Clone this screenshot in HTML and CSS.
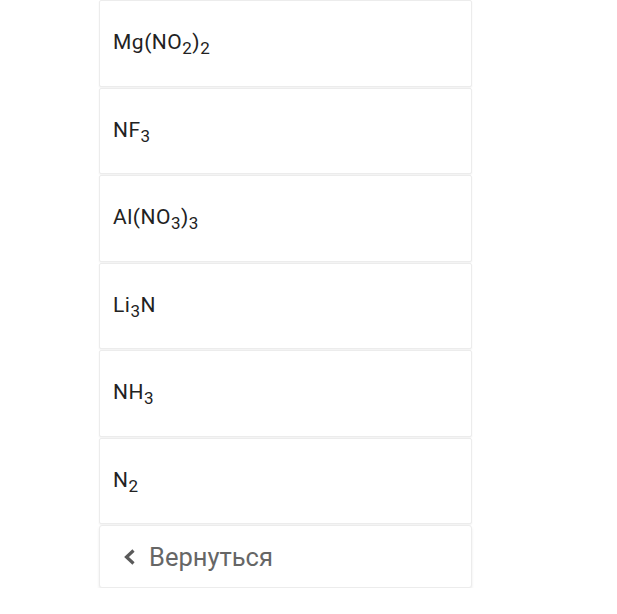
FILE: index.html
```html
<!DOCTYPE html>
<html>
<head>
    <meta charset="UTF-8">
    <title>Formulas</title>
    <link rel="stylesheet" href="styles.css">
</head>
<body>
    <div class="list">
        <div class="item"><span>Mg(NO<sub>2</sub>)<sub>2</sub></span></div>
        <div class="item"><span>NF<sub>3</sub></span></div>
        <div class="item"><span>Al(NO<sub>3</sub>)<sub>3</sub></span></div>
        <div class="item"><span>Li<sub>3</sub>N</span></div>
        <div class="item"><span>NH<sub>3</sub></span></div>
        <div class="item"><span>N<sub>2</sub></span></div>
        <div class="back">
            <svg class="back-icon" width="13" height="16" viewBox="0 0 13 16">
                <path d="M10.5 1.5 L3.5 8 L10.5 14.5" fill="none" stroke="#5A5A5A" stroke-width="3.2"/>
            </svg>
            <span>Вернуться</span>
        </div>
    </div>
</body>
</html>
```

FILE: styles.css
```css
body {
    margin: 0;
    background-color: #FFFFFF;
    font-family: Roboto, "Noto Sans", sans-serif;
}
.list {
    width: 373px;
    margin-left: 99px;
    display: flex;
    flex-direction: column;
    gap: 1px;
}
.item {
    height: 86.5px;
    box-sizing: border-box;
    display: flex;
    align-items: center;
    padding-left: 13px;
    padding-bottom: 2px;
    font-size: 21px;
    letter-spacing: 0.5px;
    color: #222222;
    background-color: #FFFFFF;
    border: 1px solid #ECECEC;
    border-radius: 2px;
    box-shadow: 0 1px 2px rgba(0, 0, 0, 0.06);
}
.item sub {
    font-size: 17px;
    vertical-align: -5px;
    line-height: 0;
}
.back {
    height: 63px;
    box-sizing: border-box;
    display: flex;
    align-items: center;
    padding-left: 23px;
    padding-top: 1px;
    font-size: 25.5px;
    color: #666666;
    background-color: #FFFFFF;
    border: 1px solid #ECECEC;
    border-radius: 3px;
    box-shadow: 0 2px 3px rgba(0, 0, 0, 0.08);
}
.back-icon {
    margin-right: 13px;
}
```
